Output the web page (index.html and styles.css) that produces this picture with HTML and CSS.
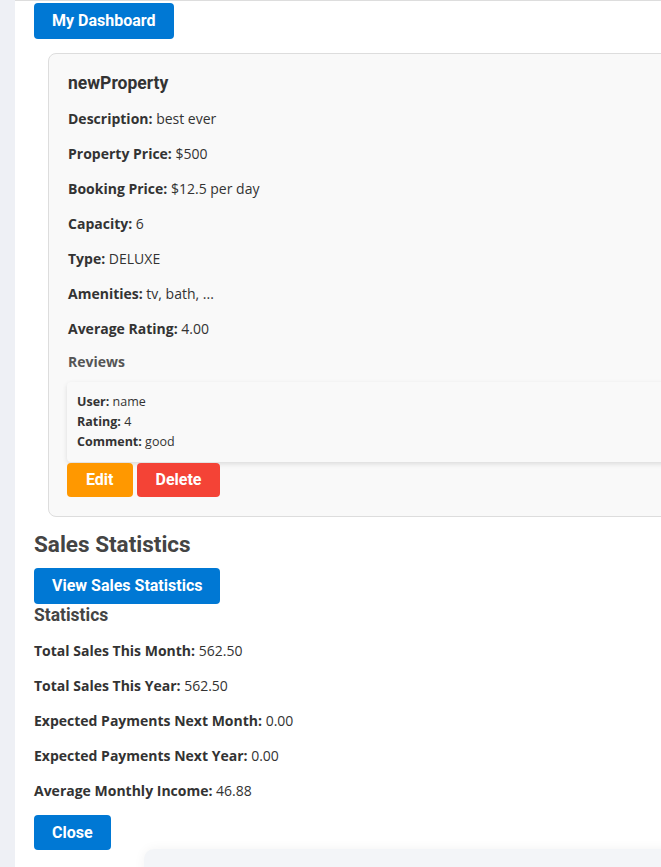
FILE: index.html
```html
<!DOCTYPE html>
<html lang="en">
<head>
<meta charset="utf-8">
<title>My Dashboard</title>
<link rel="stylesheet" href="styles.css">
</head>
<body>
<div class="page">
  <main class="panel">
    <button class="btn btn-blue btn-dash">My Dashboard</button>

    <section class="card">
      <h3 class="card-title">newProperty</h3>
      <p class="row"><b>Description:</b> best ever</p>
      <p class="row"><b>Property Price:</b> $500</p>
      <p class="row"><b>Booking Price:</b> $12.5 per day</p>
      <p class="row"><b>Capacity:</b> 6</p>
      <p class="row"><b>Type:</b> DELUXE</p>
      <p class="row"><b>Amenities:</b> tv, bath, ...</p>
      <p class="row"><b>Average Rating:</b> 4.00</p>
      <h4 class="reviews-title">Reviews</h4>
      <div class="review">
        <div class="review-line"><b>User:</b> name</div>
        <div class="review-line"><b>Rating:</b> 4</div>
        <div class="review-line"><b>Comment:</b> good</div>
      </div>
      <div class="actions">
        <button class="btn btn-orange">Edit</button>
        <button class="btn btn-red">Delete</button>
      </div>
    </section>

    <h2 class="section-title">Sales Statistics</h2>
    <button class="btn btn-blue btn-view">View Sales Statistics</button>
    <h3 class="stats-title">Statistics</h3>
    <p class="row"><b>Total Sales This Month:</b> 562.50</p>
    <p class="row"><b>Total Sales This Year:</b> 562.50</p>
    <p class="row"><b>Expected Payments Next Month:</b> 0.00</p>
    <p class="row"><b>Expected Payments Next Year:</b> 0.00</p>
    <p class="row"><b>Average Monthly Income:</b> 46.88</p>
    <button class="btn btn-blue btn-close">Close</button>
    <div class="next-box"></div>
  </main>
</div>
</body>
</html>
```
FILE: styles.css
```css
html, body {
  margin: 0;
  padding: 0;
}
body {
  background: #eef0f5;
  font-family: "Segoe UI", "Open Sans", "Noto Sans", sans-serif;
  color: #333;
  overflow: hidden;
  width: 661px;
  height: 867px;
}
.page {
  padding-left: 15px;
}
.panel {
  background: #fff;
  border-top: 1px solid #dddddd;
  padding: 2px 0 0 19px;
  width: 900px;
  height: 900px;
  box-sizing: border-box;
}
.btn {
  font-family: Roboto, "Liberation Sans", sans-serif;
  font-weight: 700;
  font-size: 16px;
  line-height: 18px;
  color: #fff;
  border: none;
  border-radius: 4px;
  padding: 9px 18px;
  cursor: pointer;
  margin: 0;
}
.btn-blue { background: #0078d4; }
.btn-orange { background: #ff9800; padding: 8px 19px; }
.btn-red { background: #f44336; padding: 8px 19px; }
.btn-dash { display: block; }
.card {
  margin: 14px 0 0 14px;
  background: #f9f9f9;
  border: 1px solid #dddddd;
  border-radius: 8px;
  padding: 19px;
  width: 820px;
}
.card-title {
  font-family: Roboto, "Liberation Sans", sans-serif;
  font-size: 17.5px;
  line-height: 21px;
  font-weight: 700;
  margin: 0;
  color: #333;
}
.row {
  font-size: 14px;
  line-height: 21px;
  margin: 14px 0;
}
.reviews-title {
  font-size: 14px;
  line-height: 17px;
  font-weight: 700;
  color: #555;
  margin: 14px 0 12px;
}
.review {
  background: #f9f9f9;
  border-radius: 4px;
  box-shadow: 0 2px 5px rgba(0, 0, 0, 0.12);
  padding: 10px 10px;
  margin-left: -1px;
}
.review-line {
  font-size: 12.5px;
  line-height: 20px;
}
.actions {
  display: flex;
  gap: 4px;
  margin-top: 1px;
  margin-left: -1px;
}
.section-title {
  font-family: Roboto, "Liberation Sans", sans-serif;
  font-size: 22.5px;
  line-height: 26px;
  font-weight: 700;
  color: #444;
  margin: 14px 0 11px;
}
.btn-view { display: block; }
.stats-title {
  font-family: Roboto, "Liberation Sans", sans-serif;
  font-size: 17.5px;
  line-height: 22px;
  font-weight: 700;
  color: #444;
  margin: 0;
}
.btn-close { display: block; margin-top: 14px; padding: 9px 18px 8px; }
.next-box {
  margin: -1px 0 0 110px;
  width: 700px;
  height: 60px;
  background: #f3f5f8;
  border-radius: 10px;
  box-shadow: 0 0 12px rgba(0, 0, 0, 0.05);
}
```
